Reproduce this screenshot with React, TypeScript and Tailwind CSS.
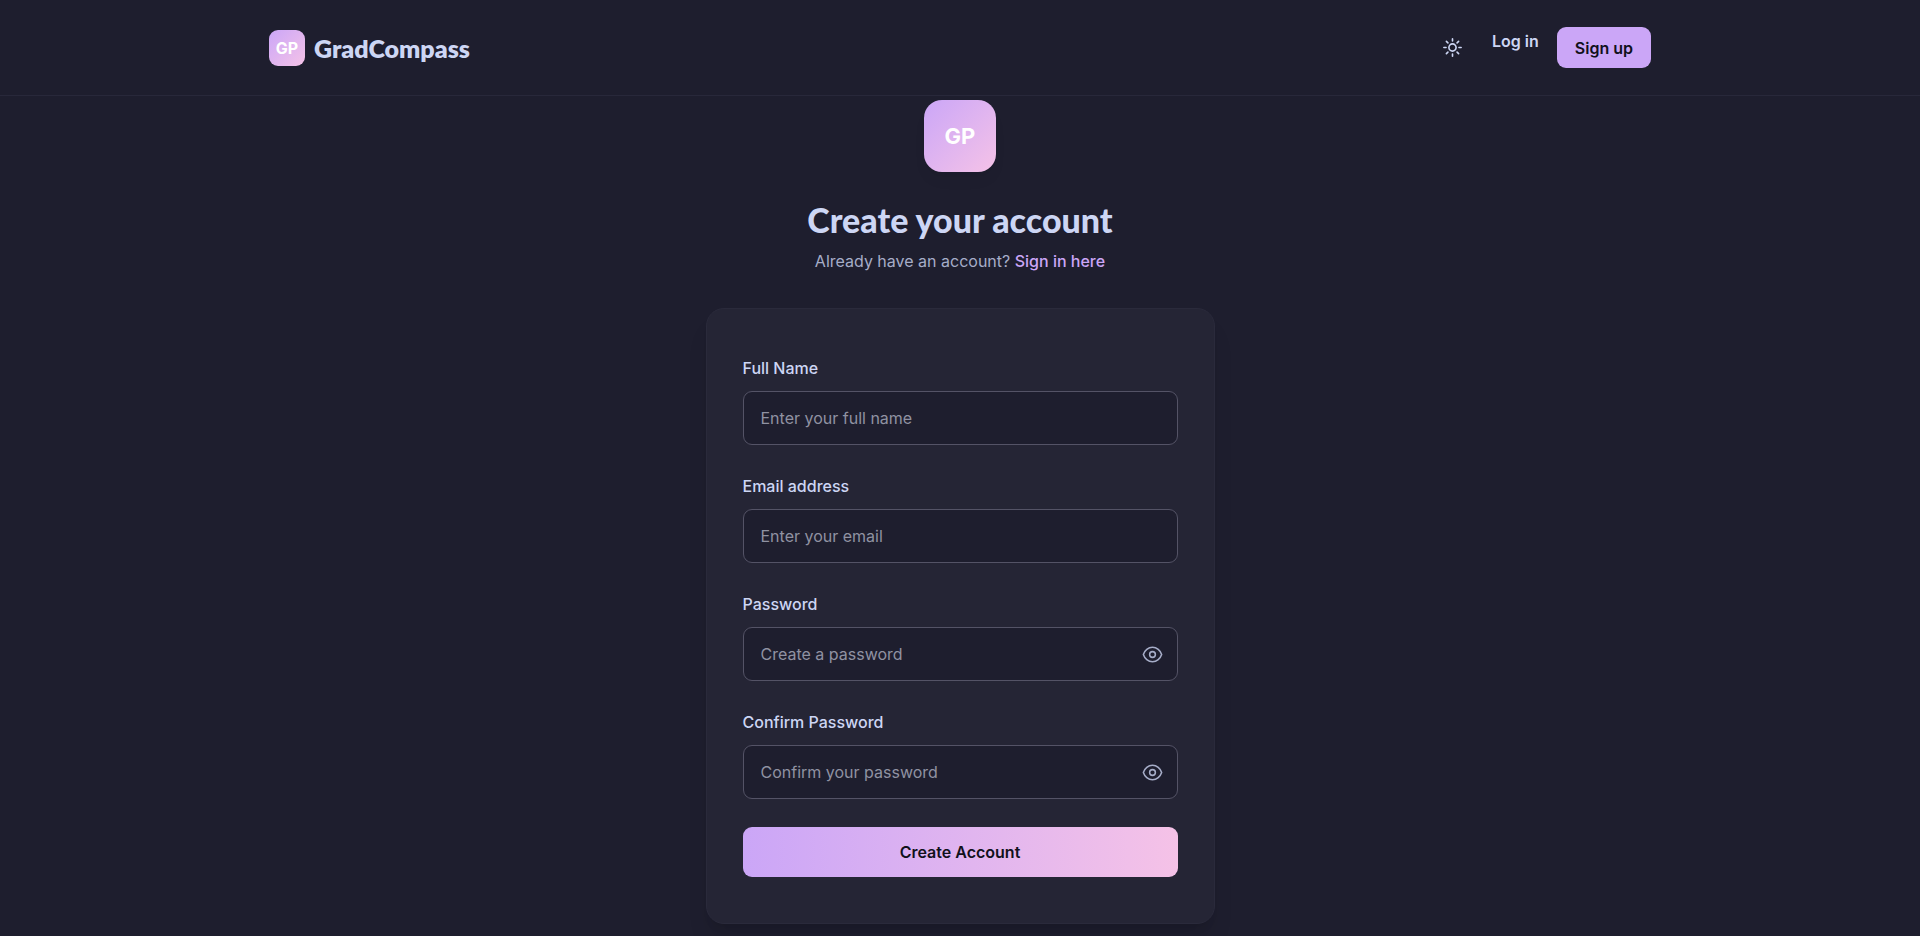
import { useState } from "react";

function Sun() {
  return (
    <svg viewBox="0 0 24 24" className="size-[23px]" fill="none" stroke="currentColor" strokeWidth="1.7" strokeLinecap="round" aria-hidden="true">
      <path d="M12 3v2.25m6.364.386-1.591 1.591M21 12h-2.25m-.386 6.364-1.591-1.591M12 18.75V21m-4.773-4.227-1.591 1.591M5.25 12H3m4.227-4.773L5.636 5.636M15.75 12a3.75 3.75 0 1 1-7.5 0 3.75 3.75 0 0 1 7.5 0Z" />
    </svg>
  );
}

function Eye() {
  return (
    <svg viewBox="0 0 24 24" className="size-[23px]" fill="none" stroke="currentColor" strokeWidth="1.6" strokeLinecap="round" strokeLinejoin="round" aria-hidden="true">
      <path d="M15 12a3 3 0 1 1-6 0 3 3 0 0 1 6 0Z" />
      <path d="M2.458 12C3.732 7.943 7.523 4.5 12 4.5c4.478 0 8.268 3.443 9.542 7.5-1.274 4.057-5.064 7.5-9.542 7.5-4.477 0-8.268-3.443-9.542-7.5Z" />
    </svg>
  );
}

type FieldProps = { id: string; label: string; placeholder: string; type: string };

function Field({ id, label, placeholder, type }: FieldProps) {
  const [visible, setVisible] = useState(false);
  const secret = type === "password";
  return (
    <div>
      <label htmlFor={id} className="mb-[11px] block font-medium">
        {label}
      </label>
      <div className="relative">
        <input
          id={id}
          type={secret && visible ? "text" : type}
          placeholder={placeholder}
          className="block h-[54px] w-full rounded-[9px] border border-[#545366] bg-[#1e1e2e] px-[17px] text-[#cdd6f4] outline-none placeholder:text-[#9092a2] focus:border-[#cba6f7]"
        />
        {secret && (
          <button
            type="button"
            aria-label="Show password"
            onClick={() => setVisible(!visible)}
            className="absolute inset-y-0 right-0 flex items-center pr-3.5 text-[#a6adc8]"
          >
            <Eye />
          </button>
        )}
      </div>
    </div>
  );
}

const fields: FieldProps[] = [
  { id: "name", label: "Full Name", placeholder: "Enter your full name", type: "text" },
  { id: "email", label: "Email address", placeholder: "Enter your email", type: "email" },
  { id: "password", label: "Password", placeholder: "Create a password", type: "password" },
  { id: "confirm", label: "Confirm Password", placeholder: "Confirm your password", type: "password" },
];

export default function App() {
  return (
    <div className="min-h-screen bg-[#1e1e2e] font-['Inter',sans-serif] text-base text-[#cdd6f4]">
      <header className="border-b border-[#28283a]">
        <div className="mx-auto flex h-[95px] max-w-[1440px] items-center justify-between px-[29px]">
          <a href="#" className="flex items-center gap-[9px]">
            <span className="flex size-9 items-center justify-center rounded-[9px] bg-linear-to-br from-[#cba6f7] to-[#f5c2e7] text-base font-bold text-white">
              GP
            </span>
            <span className="font-['Lato',sans-serif] text-[25px] leading-8 font-extrabold">GradCompass</span>
          </a>
          <nav className="flex items-center">
            <button type="button" aria-label="Toggle theme" className="mr-7 flex text-[#cdd6f4]">
              <Sun />
            </button>
            <div className="flex items-start gap-[18px]">
              <a href="#" className="pt-0.5 font-semibold">Log in</a>
              <a href="#" className="flex h-[41px] items-center rounded-[9px] bg-[#cba6f7] px-[18px] font-semibold text-[#11111b]">
                Sign up
              </a>
            </div>
          </nav>
        </div>
      </header>

      <main className="mx-auto flex max-w-[509px] flex-col items-center pt-1 pb-3">
        <div className="flex size-18 items-center justify-center rounded-[18px] bg-linear-to-br from-[#cba6f7] to-[#f5c2e7] text-[22px] font-bold text-white shadow-lg shadow-black/5">
          GP
        </div>
        <h1 className="mt-7 text-center font-['Lato',sans-serif] text-[34px] leading-10 font-black">Create your account</h1>
        <p className="mt-[9px] text-center text-[#a6adc8]">
          Already have an account?{" "}
          <a href="#" className="font-medium text-[#cba6f7]">Sign in here</a>
        </p>

        <form
          onSubmit={(e) => e.preventDefault()}
          className="mt-[35px] w-full rounded-[18px] border border-[#2a2a3b] bg-[#252535] px-9 pt-[47px] pb-[46px] shadow-xl"
        >
          <div className="flex flex-col gap-[29px]">
            {fields.map((f) => (
              <Field key={f.id} {...f} />
            ))}
          </div>
          <button
            type="submit"
            className="mt-7 h-[50px] w-full rounded-[9px] bg-linear-to-r from-[#cba6f7] to-[#f5c2e7] font-semibold text-[#11111b]"
          >
            Create Account
          </button>
        </form>
      </main>
    </div>
  );
}
